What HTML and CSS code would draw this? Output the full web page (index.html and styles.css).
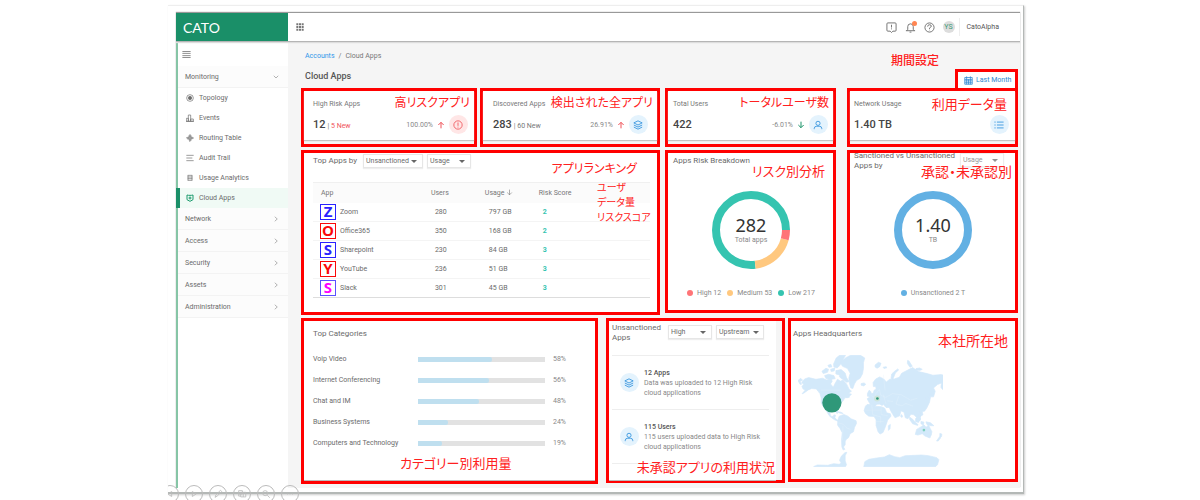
FILE: index.html
```html
<!DOCTYPE html>
<html lang="ja">
<head>
<meta charset="utf-8">
<title>Cloud Apps</title>
<link rel="stylesheet" href="styles.css">
</head>
<body>
<svg class="defs" aria-hidden="true">
  <symbol id="i-layers" viewBox="0 0 24 24"><path d="M12 2 22 7 12 12 2 7zM2 12l10 5 10-5M2 17l10 5 10-5"/></symbol>
  <symbol id="i-user" viewBox="0 0 24 24"><circle cx="12" cy="8" r="5"/><path d="M3 22v-2q0-5 6-5h6q6 0 6 5v2"/></symbol>
  <symbol id="i-up" viewBox="0 0 24 24"><path d="M12 22V4M4 12l8-8 8 8"/></symbol>
  <symbol id="i-down" viewBox="0 0 24 24"><path d="M12 2v18M4 12l8 8 8-8"/></symbol>
  <symbol id="i-right" viewBox="0 0 24 24"><path d="M7 3l10 9-10 9"/></symbol>
</svg>
<div class="stage">
<div class="slide">
  <div class="app">
    <header class="topbar">
      <div class="brand">CATO</div>
      <button class="ghost apps-btn" aria-label="Apps"><svg class="solid" viewBox="0 0 24 24"><path d="M1 1h6v6H1zM9 1h6v6H9zM17 1h6v6h-6zM1 9h6v6H1zM9 9h6v6H9zM17 9h6v6h-6zM1 17h6v6H1zM9 17h6v6H9zM17 17h6v6h-6z"/></svg></button>
      <div class="tools">
        <button class="ghost" aria-label="Alerts"><svg viewBox="0 0 24 24"><path d="M4 2h16q2 0 2 2v14q0 2-2 2h-5l-3 3-3-3H4q-2 0-2-2V4q0-2 2-2zM12 6v6M12 14v2"/></svg></button>
        <button class="ghost bell" aria-label="Notifications"><svg viewBox="0 0 24 24"><path d="M2 19h20M4 19l2-3V10q0-6 6-6t6 6v6l2 3M10 22h4"/></svg><i class="dot"></i></button>
        <button class="ghost" aria-label="Help"><svg viewBox="0 0 24 24"><circle cx="12" cy="12" r="10"/><path d="M8 10q0-4 4-4t4 3q0 2-4 4v2M12 17v1"/></svg></button>
        <span class="avatar">YS</span>
        <span class="account">CatoAlpha</span>
      </div>
    </header>
    <div class="body">
      <nav class="side">
        <button class="ghost burger" aria-label="Menu"><svg viewBox="0 0 24 24"><path d="M1 4h22M1 9h22M1 15h22M1 20h22"/></svg></button>
        <a class="section" href="#">Monitoring<svg viewBox="0 0 24 24"><path d="M3 7l9 9 9-9"/></svg></a>
        <a class="item" href="#"><svg viewBox="0 0 24 24"><circle cx="12" cy="12" r="10"/><circle class="fill" cx="12" cy="12" r="5"/></svg>Topology</a>
        <a class="item" href="#"><svg viewBox="0 0 24 24"><path d="M1 22V13h6v9zM7 22V3h7v19zM14 22V15h8v7zM0 22h24"/></svg>Events</a>
        <a class="item" href="#"><svg viewBox="0 0 24 24"><path d="M12 2v20M2 12h20M8 6l4-4 4 4M8 18l4 4 4-4M6 8l-4 4 4 4M18 8l4 4-4 4M8 8h8v8H8z"/></svg>Routing Table</a>
        <a class="item" href="#"><svg viewBox="0 0 24 24"><path d="M1 4h22M1 12h18M1 20h22"/></svg>Audit Trail</a>
        <a class="item" href="#"><svg viewBox="0 0 24 24"><path d="M5 4h14M5 9h14M5 14h14M5 19h14M6 4v15M18 4v15"/></svg>Usage Analytics</a>
        <a class="item on" href="#"><svg viewBox="0 0 24 24"><path d="M3 3l5 1h8l5-1v14l-9 5-9-5z"/><circle cx="12" cy="12" r="3"/></svg>Cloud Apps</a>
        <a class="section" href="#">Network<svg><use href="#i-right"/></svg></a>
        <a class="section" href="#">Access<svg><use href="#i-right"/></svg></a>
        <a class="section" href="#">Security<svg><use href="#i-right"/></svg></a>
        <a class="section" href="#">Assets<svg><use href="#i-right"/></svg></a>
        <a class="section" href="#">Administration<svg><use href="#i-right"/></svg></a>
      </nav>
      <main class="main">
        <div class="crumbs"><a href="#">Accounts</a><span>/</span>Cloud Apps</div>
        <div class="head">
          <h1>Cloud Apps</h1>
          <span class="note note-period">期間設定</span>
          <button class="period"><svg viewBox="0 0 24 24"><path d="M2 4h20v18H2zM2 9h20M2 13h20M2 18h20M7 1v21M12 9v13M17 1v21"/></svg>Last Month</button>
        </div>

        <div class="grid upper">
          <div class="pair">
            <section class="frame kpi k1">
              <div class="card">
                <h2>High Risk Apps</h2>
                <div class="figures"><b>12</b><small>| <em>5 New</em></small><span class="delta">100.00%</span><svg class="arrow red"><use href="#i-up"/></svg>
                <span class="disc alert"><svg viewBox="0 0 24 24"><circle cx="12" cy="12" r="10"/><path d="M12 6v8M12 16v2"/></svg></span></div>
              </div>
              <span class="note small-note">高リスクアプリ</span>
            </section>
            <section class="frame kpi k2">
              <div class="card">
                <h2>Discovered Apps</h2>
                <div class="figures"><b>283</b><small>| 60 New</small><span class="delta">26.91%</span><svg class="arrow red"><use href="#i-up"/></svg>
                <span class="disc"><svg><use href="#i-layers"/></svg></span></div>
              </div>
              <span class="note small-note">検出された全アプリ</span>
            </section>
          </div>
          <section class="frame kpi k3">
            <div class="card">
              <h2>Total Users</h2>
              <div class="figures"><b>422</b><span class="delta">-6.01%</span><svg class="arrow green"><use href="#i-down"/></svg>
              <span class="disc"><svg><use href="#i-user"/></svg></span></div>
            </div>
            <span class="note small-note">トータルユーザ数</span>
          </section>
          <section class="frame kpi k4">
            <div class="card">
              <h2>Network Usage</h2>
              <div class="figures"><b>1.40 TB</b><span class="delta"></span>
              <span class="disc"><svg viewBox="0 0 24 24"><path d="M7 5h16M7 12h16M7 19h16M1 5h3M1 12h3M1 19h3"/></svg></span></div>
            </div>
            <span class="note note-usage">利用データ量</span>
          </section>
        </div>

        <div class="grid middle">
          <section class="frame top-apps">
            <div class="bar-head">
              <h2>Top Apps by</h2>
              <span class="pick wide"><select aria-label="App type"><option>Unsanctioned</option></select></span>
              <span class="pick"><select aria-label="Metric"><option>Usage</option></select></span>
            </div>
            <table>
              <thead><tr><th class="c-app">App</th><th class="c-num">Users</th><th class="c-num">Usage <svg><use href="#i-down"/></svg></th><th>Risk Score</th></tr></thead>
              <tbody>
                <tr><td><span class="logo blue">Z</span>Zoom</td><td>280</td><td>797 GB</td><td class="score">2</td></tr>
                <tr><td><span class="logo crimson">O</span>Office365</td><td>350</td><td>168 GB</td><td class="score">2</td></tr>
                <tr><td><span class="logo blue">S</span>Sharepoint</td><td>230</td><td>84 GB</td><td class="score">3</td></tr>
                <tr><td><span class="logo crimson">Y</span>YouTube</td><td>236</td><td>51 GB</td><td class="score">3</td></tr>
                <tr><td><span class="logo pink">S</span>Slack</td><td>301</td><td>45 GB</td><td class="score">3</td></tr>
              </tbody>
            </table>
            <span class="note note-rank">アプリランキング</span>
            <span class="note note-list">ユーザ<br>データ量<br>リスクスコア</span>
          </section>
          <section class="frame chart">
            <div class="chart-head"><h2>Apps Risk Breakdown</h2></div>
            <div class="donut">
              <svg viewBox="0 0 78 78">
                <circle cx="39" cy="39" r="35" stroke="#35c4b0" pathLength="282" stroke-dasharray="217 65" stroke-dashoffset="-65"/>
                <circle cx="39" cy="39" r="35" stroke="#ffc87f" pathLength="282" stroke-dasharray="53 229" stroke-dashoffset="-12"/>
                <circle cx="39" cy="39" r="35" stroke="#ff7477" pathLength="282" stroke-dasharray="12 270"/>
              </svg>
              <div class="total"><b>282</b><span>Total apps</span></div>
            </div>
            <ul class="legend"><li class="l-high">High 12</li><li class="l-med">Medium 53</li><li class="l-low">Low 217</li></ul>
            <span class="note note-chart">リスク別分析</span>
          </section>
          <section class="frame chart">
            <div class="chart-head clip"><h2>Sanctioned vs Unsanctioned<br>Apps by</h2><span class="pick over"><select aria-label="Sanction metric"><option>Usage</option></select></span></div>
            <div class="donut">
              <svg viewBox="0 0 78 78"><circle cx="39" cy="39" r="35" stroke="#62b0e3"/></svg>
              <div class="total"><b>1.40</b><span>TB</span></div>
            </div>
            <ul class="legend"><li class="l-un">Unsanctioned 2 T</li></ul>
            <span class="note note-sanction">承認・未承認別</span>
          </section>
        </div>

        <div class="grid lower">
          <section class="frame cats">
            <h2>Top Categories</h2>
            <ul>
              <li><span>Voip Video</span><div class="track"><div style="width:58%"></div></div><small>58%</small></li>
              <li><span>Internet Conferencing</span><div class="track"><div style="width:56%"></div></div><small>56%</small></li>
              <li><span>Chat and IM</span><div class="track"><div style="width:48%"></div></div><small>48%</small></li>
              <li><span>Business Systems</span><div class="track"><div style="width:24%"></div></div><small>24%</small></li>
              <li><span>Computers and Technology</span><div class="track"><div style="width:19%"></div></div><small>19%</small></li>
            </ul>
            <span class="note note-cats">カテゴリー別利用量</span>
          </section>
          <section class="frame unsan">
            <div class="card">
              <div class="unsan-head">
                <h2>Unsanctioned Apps</h2>
                <span class="pick"><select aria-label="Risk"><option>High</option></select></span>
                <span class="pick mid"><select aria-label="Direction"><option>Upstream</option></select></span>
              </div>
              <div class="fact"><span class="disc"><svg><use href="#i-layers"/></svg></span><p><b>12 Apps</b><br>Data was uploaded to 12 High Risk<br>cloud applications</p></div>
              <div class="fact"><span class="disc"><svg><use href="#i-user"/></svg></span><p><b>115 Users</b><br>115 users uploaded data to High Risk<br>cloud applications</p></div>
              <div class="fact-end"></div>
            </div>
            <span class="note note-unsan">未承認アプリの利用状況</span>
          </section>
          <section class="frame hq">
            <h2>Apps Headquarters</h2>
            <svg class="map" viewBox="50 137 437 336" role="img" aria-label="World map">
              <g class="land">
                <path d="M50 214l8-7 6 6-8 4 5 8-5 0zM70 209l12-4 22 5 20-3 12 5 14-3 3 7-5 8 8 10 7-14 6-10 9 6 7-4 11 12 8 16 7 6-9 6 9 3-8 8-12 3-6 10-8 6-3 10-4 10-2 12-5-8-11 0-6 4 2 11 8 1 2-5 5 1-2 8 7 7 8 2-2 3-14-6-14-10-8-12-6-10-12-18 0-15-4-14-11-14-14-1-10 4-14 10-5 2 10-12-7-3-3-7 5-7-6-5z"/>
                <path d="M122 186l12-9 8 3-3 9-13 4zM130 199l12-4 16 4 4 9-14 3-14-3zM148 180l13-4-2 9-9 2zM157 164l8-18 10-8 18 0-8 14-9 16-8 8-10-3zM164 184l16-3 12 10 4 14 8 12-8 2-12-10-10-12-10-3zM140 168l9-3 3 8-9 1zM172 215l8 3-3 7-7-4zM192 262l10-3 3 5-9 2zM165 307l14 2 7 4-10-1zM174 201l11-3 5 13-10-3z"/>
                <path d="M182 155l12-10 14-7 30 0 13 8-4 14 0 18-3 16-7 13-11 7-6 10-5 14-6-2-4-13-2-17 4-14-8-14-15-7-6-9z"/>
                <path d="M174 321l14-5 12 5 10 8 15 6 1 8-6 12-3 13-10 6-5 12-7 5-3 7 0 9-5 7 4 7-5 2-4-9-1-20 2-23-6-12-8-11 1-15z"/>
                <path d="M240 223l9-2 5 4-6 5-8-2zM259 253l5-10 5 4 3 10-5 5-8-1zM282 167l10-8 8 3-4 10-8 5-6-4zM306 174l9-2 3 3-9 3zM330 207l2-13 10-9 8-6 3 3-10 9-5 13-3 8zM380 153l4 2 10 16-7 3-8-12zM405 178l11-2 8 4-8 4-11-2z"/>
                <path d="M258 269l7-5 3-8 9-5 2-8 6-3-1-8-7 0-1-12 8-11 12-6 12 6 8 9 10-8 14-1 15-5 7-12 17-9 16-8 18 12 26 6 17 5 25-2 29 8 2 14-9 3-7 3-11 17-5-7 2-13-12 5-12 10 5 10-5 17-9 0-3 16-8 17-7 10-7 1 2 10-8 5 1 11-7 2-5-10-8-8-9-2-9 14-8-3-4-17-9-4-4 15-14 6-6-9-8-14-3-8-10 0-8-9-4 3-7-4-8 0-7 7-11-2z"/>
                <path d="M258 286l20 0 5 5 19 2 9 4 6 14 11 3 2 7-10 12-4 12-4 11-6 14-9 5-6-7-6-19 0-17-6-10-16-1-10-8-4-9 4-13zM322 350l6-4-1 13-5 5zM361 316l4 5-2 4-4-3zM386 324l10 7 9 11 6 4-1 3-15-5-9-13zM404 328l9-7 5 7-5 12-9-2zM420 337l9 2-2 9-7-4zM435 338l14 3 10 9-9 0-12-4zM412 310l6 0 1 13-6-4zM432 267l8-6 3-9 5 1-2 11-10 7-5 5-5-3zM407 361l15-9 7-5 5 6 5 1 3-8 6 12 5 10-2 11-8 6-11-4-8-7-13 4-8-2zM443 382l6 0-2 5-5-3zM477 373l6 2-1 8-5 3zM476 383l3 4-7 9-5 0z"/>
                <path d="M248 473l3-15 12-7 24-4 23-3 15-7 16 6 15 3 17-6 29-1 20-1 21 2 25 6 6 6-4 15-6 6zM97 473l11-5 32 1 17-5 17 2 6-4-5-8 5-12 11-11 6-1-5 10 0 16 4 11-3 6z"/>
              </g>
              <path class="lines" d="M118 243h60M172 342l13 3 12 12 11 4M185 351l-1 42M252 303l48 0M272 287l3 30 24 6 0 20M284 337l24 0M300 292l0 24 20 4M271 259l12 8 0-12 12-14 4 17 14 7 22-12 26 4 28 16 20-6M307 256l8 28M353 261l-8 24 18 5 11-7 22 8M318 275l18 2M307 196l5 47"/>
              <circle class="us" cx="152" cy="281" r="29"/>
              <circle class="halo" cx="288" cy="268" r="9"/><circle class="us" cx="289" cy="268" r="4"/>
              <circle class="au" cx="429" cy="363" r="4"/>
            </svg>
            <span class="note note-hq">本社所在地</span>
          </section>
        </div>
      </main>
    </div>
  </div>
  <div class="player">
    <button aria-label="Previous"><svg viewBox="0 0 24 24"><path d="M16 6v12L7 12z"/></svg></button>
    <button aria-label="Next"><svg viewBox="0 0 24 24"><path d="M8 6v12l9-6z"/></svg></button>
    <button aria-label="Pen"><svg viewBox="0 0 24 24"><path d="M5 20l2-6L18 3l3 3L10 17z"/></svg></button>
    <button aria-label="Slides"><svg viewBox="0 0 24 24"><path d="M4 4h9v8H4zM9 8h12v11H9zM15 8v11M4 12v5h5"/></svg></button>
    <button aria-label="Zoom"><svg viewBox="0 0 24 24"><circle cx="10" cy="10" r="6"/><path d="M15 15l6 6"/></svg></button>
    <button aria-label="More"><svg viewBox="0 0 24 24"><path d="M5 12h2M11 12h2M17 12h2"/></svg></button>
  </div>
</div>
</div>
</body>
</html>
```
FILE: styles.css
```css
* { box-sizing: border-box; }
body { margin: 0; background: #fff; color: #6b6b6b; font: 7px/10px Roboto, "Noto Sans CJK JP", sans-serif; }
h1, h2, p, ul { margin: 0; padding: 0; }
ul { list-style: none; }
a { color: inherit; text-decoration: none; }
button, select { font: inherit; color: inherit; margin: 0; }
svg { fill: none; stroke: currentColor; stroke-width: 2; display: block; flex: none; }
.solid { fill: currentColor; stroke: none; }
.fill { fill: currentColor; }
.defs { position: absolute; width: 0; height: 0; }
h2 { font-size: 8px; font-weight: 400; line-height: 10px; }

.stage { min-height: 100vh; padding: 5px 14.67% 5px 14%; overflow: hidden; position: relative; }
.slide { position: relative; padding: 7px 3px 4px 8px; border: solid #b4b8b6; border-width: 1px 1px 2px 0; border-top-color: #eee; box-shadow: 1px 1px 2px #ccc; }
.app { box-shadow: 0 -1px 1px #999; }

.topbar { display: flex; align-items: center; height: 29px; background: #fff; border-bottom: 1px solid #b5b5b5; position: relative; box-shadow: 0 1px 1px #ddd; }
.brand { width: 112px; height: 28px; padding-left: 7px; background: #1a8f68; color: #fff; font: 14px/30px Lato, sans-serif; }
.ghost { padding: 0; border: 0; background: none; display: block; }
.apps-btn { margin-left: 8px; color: #777; }
.apps-btn svg { width: 8px; height: 8px; }
.tools { margin-left: auto; display: flex; align-items: center; gap: 8px; padding-right: 21px; }
.tools svg { width: 11px; height: 11px; }
.bell { position: relative; }
.dot { position: absolute; right: -1px; top: -1px; width: 5px; height: 5px; border-radius: 50%; background: #ff8552; }
.avatar { width: 12px; height: 12px; border-radius: 50%; background: #ddd; color: #3c9c78; font-size: 7px; line-height: 12px; text-align: center; }
.account { margin-left: -4px; padding: 4px 0 4px 7px; border-left: 1px solid #eee; color: #555; }

.body { display: flex; }
.side { width: 112px; flex: none; background: #fff; border-left: 2px solid #86c5a6; }
.burger { height: 24px; padding: 0 0 0 4px; }
.burger svg { width: 9px; height: 9px; }
.section { display: flex; justify-content: space-between; align-items: center; height: 22px; padding: 0 9px 0 7px; background: #fcfcfc; border-bottom: 1px solid #f3f3f3; }
.section svg { width: 6px; height: 6px; }
.item { display: flex; align-items: center; gap: 5px; height: 20px; padding-left: 8px; }
.item svg { width: 8px; height: 8px; }
.item.on { background: #f0faf5; border-left: 4px solid #1a8f68; margin-left: -2px; padding-left: 6px; }
.item.on svg { color: #1a9a6c; stroke-width: 3; }

.main { flex: 1; min-width: 0; padding: 9px 2px 4px 13px; background: #f5f5f5; }
.crumbs { display: flex; gap: 4px; padding-left: 4px; color: #777; }
.crumbs a { color: #2f95ea; }
.head { position: relative; display: flex; align-items: flex-start; justify-content: space-between; margin-top: 8px; padding-left: 4px; }
h1 { padding-top: 2px; font-size: 9px; line-height: 10px; font-weight: 500; color: #555; }
.period { display: flex; align-items: center; gap: 3px; width: 63px; height: 19px; padding: 0 0 0 6px; background: #fff; border: 3px solid #f00; border-bottom: 0; color: #2c86d0; white-space: nowrap; }
.period svg { width: 9px; height: 9px; }

.grid { display: grid; align-items: start; margin-bottom: 3px; }
.grid > :nth-child(2) { grid-column: 3; }
.grid > :nth-child(3) { grid-column: 5; }
.upper, .middle { grid-template-columns: minmax(0, 359fr) 5px minmax(0, 171fr) 11px minmax(0, 171fr); }
.lower { grid-template-columns: minmax(0, 297fr) 8px minmax(0, 179fr) 3px minmax(0, 230fr); margin-bottom: 0; }
.pair { display: grid; grid-template-columns: minmax(0, 176fr) minmax(0, 180fr); gap: 3px; }
.frame { position: relative; border: 3px solid #f00; background: #fff; }

.note { position: absolute; z-index: 1; color: #ff2020; font: 14px/14px "Noto Sans CJK JP", sans-serif; font-feature-settings: "palt"; white-space: nowrap; }
.note-period { right: 79px; top: -16px; font-size: 12px; font-weight: 500; }
.small-note { right: 4px; top: 4px; font-size: 12px; }
.note-usage { right: 8px; top: 6px; font-size: 13px; }
.note-rank { right: 20px; top: 8px; font-size: 12px; }
.note-list { left: 293px; top: 26px; font-size: 10px; line-height: 15px; }
.note-chart { right: 8px; top: 11px; font-size: 13px; }
.note-sanction { right: 3px; top: 11px; }
.note-cats { left: 96px; bottom: 11px; font-size: 13px; }
.note-unsan { right: 7px; bottom: 6px; font-size: 13px; }
.note-hq { right: 7px; top: 12px; }

.kpi { background: #f5f5f5; padding-bottom: 4px; }
.kpi .card { padding: 8px 6px 6px 9px; background: #fff; box-shadow: 0 1px 1px #c4c4c4; }
.kpi h2 { font-size: 7px; color: #777; }
.k2 .card { padding-right: 9px; padding-left: 10px; }
.k3 .card { padding-right: 5px; padding-left: 5px; }
.k4 .card { padding-left: 4px; }
.figures { display: flex; align-items: center; height: 19px; margin-top: 6px; }
.figures b { font-size: 11px; font-weight: 500; color: #444; }
.figures small { font-size: 7px; margin-left: 2px; color: #777; padding-top: 2px; }
.figures em { font-style: normal; color: #f0555c; }
.delta { margin-left: auto; color: #888; }
.arrow { width: 8px; height: 8px; margin: 0 4px; stroke-width: 3; }
.red { color: #ef5359; }
.green { color: #1a9368; }
.disc { display: flex; align-items: center; justify-content: center; flex: none; width: 19px; height: 19px; border-radius: 50%; background: #e4f3fd; color: #2b8fdc; }
.disc svg { width: 10px; height: 10px; }
.disc.alert { background: #ffe6e6; color: #ef5359; }

.pick { position: relative; display: inline-block; background: #fff; border: 1px solid #e6e6e6; box-shadow: 0 1px 1px #eee; }
.pick::after { content: ""; position: absolute; right: 5px; top: 5px; border: 3px solid transparent; border-top-color: #666; border-bottom: 0; pointer-events: none; }
.pick select { appearance: none; display: block; width: 42px; height: 12px; padding: 0 2px; border: 0; background: none; }
.pick.wide select { width: 58px; }
.pick.mid select { width: 46px; }
.pick.mid::after { right: 4px; }

.top-apps { padding: 1px 7px 14px 9px; }
.bar-head { display: flex; align-items: center; gap: 4px; height: 14px; }
.bar-head h2 { width: 46px; }
table { width: 100%; margin-top: 14px; border-collapse: collapse; table-layout: fixed; }
th { height: 20px; padding: 0; background: #fbfbfb; border-top: 1px solid #f0f0f0; text-align: left; font-weight: 400; color: #777; }
th svg { display: inline-block; width: 7px; height: 7px; vertical-align: -1px; }
.c-app { width: 35%; padding-left: 8px; }
.c-num { width: 16%; }
td { height: 19px; padding: 0 0 0 4px; border-bottom: 1px solid #f4f4f4; }
td:first-child { padding-left: 7px; }
tr:last-child td { border-color: #ddd; }
.score { color: #35c4b0; font-weight: 700; }
.logo { display: inline-block; width: 16px; height: 16px; margin-right: 4px; vertical-align: middle; border: 1px solid currentColor; background: #fff; font: bold 15px/13px "Open Sans", sans-serif; text-align: center; }
.blue { color: #2a22ff; }
.crimson { color: #fa0808; }
.pink { color: #f0f; border-color: #5a50ff; }

.chart { padding: 2px 4px 12px 5px; }
.chart-head { display: flex; height: 36px; padding-top: 1px; }
.clip { position: relative; padding: 0; }
.clip h2 { margin: -4px 0 0 -1px; white-space: nowrap; }
.over { position: absolute; right: 7px; top: -2px; opacity: .7; }
.donut { position: relative; width: 78px; margin: 0 auto; }
.donut svg { width: 100%; stroke-width: 8; }
.total { position: absolute; inset: 24px 0 auto; text-align: center; color: #888; }
.total b { display: block; font: 18px/20px "Noto Sans", sans-serif; color: #333; }
.legend { display: flex; justify-content: center; gap: 6px; margin-top: 19px; color: #888; white-space: nowrap; }
.legend li::before { content: ""; display: inline-block; width: 6px; height: 6px; margin-right: 4px; border-radius: 50%; background: var(--c); vertical-align: -1px; }
.l-high { --c: #ff7477; }
.l-med { --c: #ffc87f; }
.l-low { --c: #35c4b0; }
.l-un { --c: #62b0e3; }

.cats { padding: 8px 0 33px 9px; box-shadow: inset 0 -1px #bbb; }
.cats ul { display: grid; gap: 11px; margin-top: 15px; }
.cats li { display: flex; align-items: center; }
.cats li span { width: 105px; flex: none; }
.track { flex: 1; height: 5px; background: #e2e2e2; }
.track div { height: 100%; background: #bfdfef; border-radius: 0 2px 2px 0; }
.cats small { width: 50px; padding-left: 8px; font-size: 7px; color: #888; }

.unsan { background: #f5f5f5; padding-right: 6px; }
.unsan .card { padding: 2px 7px 16px 3px; background: #fff; box-shadow: 0 1px #bbb; }
.unsan-head { display: flex; align-items: flex-start; gap: 4px; height: 32px; }
.unsan-head h2 { width: 52px; }
.unsan-head .pick { margin-top: 2px; }
.fact { display: flex; align-items: center; gap: 5px; height: 54px; padding-left: 8px; border-top: 1px solid #eee; color: #888; white-space: nowrap; }
.fact b { font-weight: 500; color: #555; }
.fact-end { border-top: 1px solid #eee; }

.hq { padding: 8px 2px 12px; }
.map { width: 66%; margin: 16px 0 0 5px; }
.land { fill: #d3e9fa; stroke: #d3e9fa; stroke-linejoin: round; }
.lines { stroke: #e8f4fd; stroke-width: 1; }
.us { fill: #2f9879; stroke: none; }
.halo { fill: #cfe5dc; stroke: none; }
.au { fill: #7fd0bd; stroke: none; }

.player { position: absolute; left: 0; bottom: -11px; display: flex; gap: 6px; overflow: hidden; }
.player button { width: 18px; height: 18px; padding: 3px; border: 1px solid #bbb; border-radius: 50%; background: none; color: #bbb; flex: none; }
.player button:first-child { margin-left: -7px; }
.player svg { width: 10px; height: 10px; }
```
